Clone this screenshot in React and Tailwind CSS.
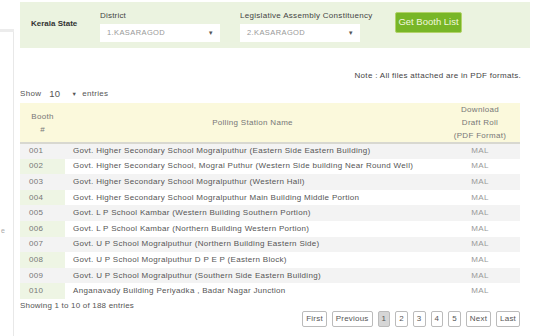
const rows = [
  ["001", "Govt. Higher Secondary School Mogralputhur (Eastern Side Eastern Building)"],
  ["002", "Govt. Higher Secondary School, Mogral Puthur (Western Side building Near Round Well)"],
  ["003", "Govt. Higher Secondary School Mogralputhur (Western Hall)"],
  ["004", "Govt. Higher Secondary School Mogralputhur Main Building Middle Portion"],
  ["005", "Govt. L P School Kambar (Western Building Southern Portion)"],
  ["006", "Govt. L P School Kambar (Northern Building Western Portion)"],
  ["007", "Govt. U P School Mogralputhur (Northern Building Eastern Side)"],
  ["008", "Govt. U P School Mogralputhur D P E P (Eastern Block)"],
  ["009", "Govt. U P School Mogralputhur (Southern Side Eastern Building)"],
  ["010", "Anganavady Building Periyadka , Badar Nagar Junction"],
];

function Select({ value }) {
  return (
    <div className="h-[18px] w-[120px] bg-white flex items-center justify-between pl-[7px] pr-[6px] text-[7.5px] text-[#999] tracking-[0.4px]">
      <span>{value}</span>
      <span className="text-[6px] text-[#555]">▼</span>
    </div>
  );
}

function PageBtn({ label, active }) {
  return (
    <div
      className={
        "h-[16px] px-[3px] min-w-[12px] flex items-center justify-center border border-[#bbb] rounded-[2px] text-[8px] tracking-[0.2px] text-[#555] " +
        (active ? "bg-[#d6d6d6]" : "bg-white")
      }
    >
      {label}
    </div>
  );
}

export default function App() {
  return (
    <div className="flex w-[540px] h-[336px] bg-white overflow-hidden text-[#555]" style={{ fontFamily: '"Liberation Sans", Arial, sans-serif' }}>
      <aside className="w-[14px] shrink-0 flex flex-col">
        <div className="h-[29px]" />
        <div className="h-[3px] bg-[#ececec]" />
        <div className="flex-1 border-r border-[#e8e8e8] relative">
          <span className="absolute left-[1px] top-[194px] text-[7px] text-[#aaa]">e</span>
        </div>
      </aside>

      <main className="flex-1 pl-[6px] pr-[10px] pt-[2px]">
        <div className="h-[46px] bg-[#ebf3e0] flex items-start">
          <div className="w-[80px] pl-[11px] pt-[16px] text-[8px] font-bold text-[#333]">Kerala State</div>
          <div className="pt-[9px] w-[140px]">
            <div className="text-[8px] tracking-[0.2px] text-[#444] mb-[3px] leading-[10px]">District</div>
            <Select value="1.KASARAGOD" />
          </div>
          <div className="pt-[9px] w-[155px]">
            <div className="text-[8px] tracking-[0.3px] text-[#444] mb-[3px] leading-[10px] whitespace-nowrap">Legislative Assembly Constituency</div>
            <Select value="2.KASARAGOD" />
          </div>
          <div className="mt-[10px] h-[21px] w-[67px] flex items-center justify-center bg-[#78b627] border border-[#b3d36a] rounded-[2px] text-[9.5px] text-[#f1f8de] whitespace-nowrap">
            Get Booth List
          </div>
        </div>

        <div className="mt-[23px] text-right text-[8px] tracking-[0.3px] text-[#444] leading-[10px] w-[501px]">
          Note : All files attached are in PDF formats.
        </div>

        <div className="mt-[8px] flex items-center text-[8px] tracking-[0.3px] text-[#555] leading-[10px]">
          <span>Show</span>
          <span className="ml-[8px] text-[9.5px]">10</span>
          <span className="ml-[11px] text-[5.5px]">▼</span>
          <span className="ml-[5px]">entries</span>
        </div>

        <table className="mt-[4px] w-[500px] border-collapse text-[8px] tracking-[0.3px]">
          <thead>
            <tr className="bg-[#fbf9dc] text-[#777] h-[40px] border-b-2 border-[#d8d8d0]">
              <th className="w-[45px] font-normal leading-[13px]">Booth<br />#</th>
              <th className="font-normal">Polling Station Name</th>
              <th className="w-[80px] font-normal leading-[13px]">Download<br />Draft Roll<br />(PDF Format)</th>
            </tr>
          </thead>
          <tbody>
            {rows.map(([id, name], i) => (
              <tr key={id} className={"h-[15.6px] " + (i % 2 === 0 ? "bg-[#f3f3f3]" : "bg-white")}>
                <td className={"pl-[9px] text-[#777] " + (i % 2 === 1 ? "bg-[#eef5e4]" : "")}>{id}</td>
                <td className="pl-[8px] text-[#555] whitespace-nowrap">{name}</td>
                <td className="text-center text-[#999]">MAL</td>
              </tr>
            ))}
          </tbody>
        </table>

        <div className="flex items-start justify-between w-[500px]">
          <div className="mt-[2px] text-[8px] tracking-[0.2px] text-[#555] leading-[10px]">Showing 1 to 10 of 188 entries</div>
          <div className="mt-[12px] flex gap-[5px]">
            <PageBtn label="First" />
            <PageBtn label="Previous" />
            <PageBtn label="1" active />
            <PageBtn label="2" />
            <PageBtn label="3" />
            <PageBtn label="4" />
            <PageBtn label="5" />
            <PageBtn label="Next" />
            <PageBtn label="Last" />
          </div>
        </div>
      </main>
    </div>
  );
}
